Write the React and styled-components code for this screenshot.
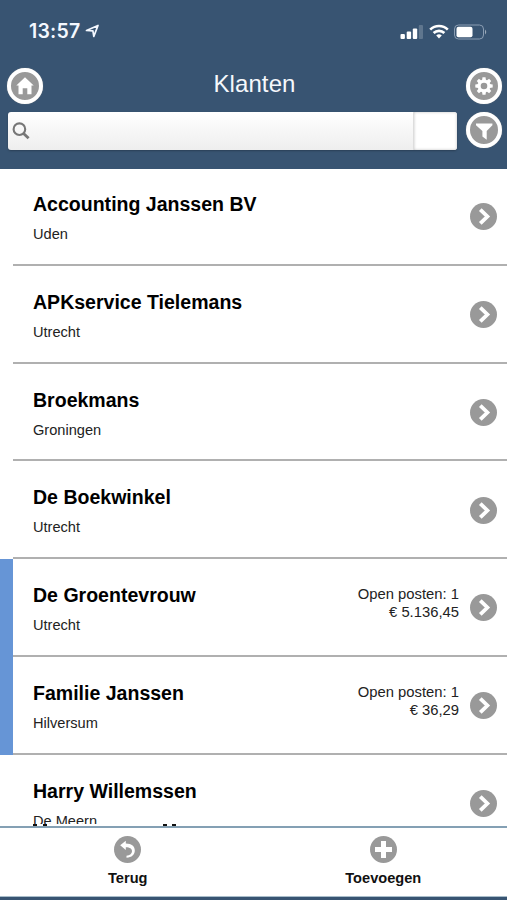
import styled, { createGlobalStyle } from "styled-components";

const GlobalStyle = createGlobalStyle`
  body {
    margin: 0;
    background-color: #385472;
    font-family: "Liberation Sans", Arial, sans-serif;
    color: #000;
  }
  * {
    box-sizing: border-box;
  }
`;

const Screen = styled.div`
  width: 507px;
  height: 900px;
  display: flex;
  flex-direction: column;
  overflow: hidden;
`;

const Header = styled.header`
  flex: none;
  height: 169px;
  background-color: #385472;
`;

const StatusBar = styled.div`
  height: 65px;
  padding: 2px 19px 5px 29px;
  display: flex;
  align-items: center;
  justify-content: space-between;
`;

const StatusGroup = styled.div`
  display: flex;
  align-items: center;
`;

const Time = styled.span`
  font-family: Inter, sans-serif;
  font-size: 19.5px;
  font-weight: 600;
  letter-spacing: 0.2px;
  color: #f4f8ff;
  width: 56px;
`;

const TitleBar = styled.div`
  height: 41px;
  padding: 0 5px 0 7px;
  display: flex;
  align-items: center;
  justify-content: space-between;
`;

const Title = styled.h1`
  margin: 0 0 4px;
  font-size: 24px;
  line-height: 30px;
  font-weight: 400;
  letter-spacing: 0.1px;
  color: #f5f8fc;
`;

const RoundButton = styled.button`
  flex: none;
  width: 36px;
  height: 36px;
  padding: 0;
  display: flex;
  align-items: center;
  justify-content: center;
  border: 4px solid #fff;
  border-radius: 50%;
  background-color: #999;
  box-shadow: 0 0 1px 0 #999;
`;

const SearchRow = styled.div`
  padding: 6px 5px 0 8px;
  display: flex;
  justify-content: space-between;
`;

const SearchBox = styled.div`
  width: 449px;
  height: 38px;
  display: flex;
  border-radius: 3px;
  overflow: hidden;
  background: linear-gradient(#fff, #eee);
  box-shadow: 0 1px 2px rgba(0, 0, 0, 0.25);
`;

const SearchField = styled.div`
  flex: 1;
  padding: 10px 0 0 4px;
`;

const SearchEnd = styled.div`
  width: 44px;
  border-left: 1px solid #ddd;
  background-color: #fff;
  box-shadow: inset 0 0 3px rgba(0, 0, 0, 0.25);
`;

const List = styled.main`
  flex: 1;
  min-height: 0;
  position: relative;
  overflow: hidden;
  background-color: #fff;
`;

const Row = styled.div`
  height: 97.8px;
  display: flex;
  border-left: 13px solid ${({ $marked }) => ($marked ? "#6695d6" : "#fff")};
  &:first-child {
    margin-top: -1px;
  }
`;

const RowBody = styled.div`
  flex: 1;
  padding: 0 10px 0 20px;
  display: flex;
  border-bottom: 2px solid #b0b0b0;
`;

const Customer = styled.div`
  flex: 1;
  padding-top: 24px;
`;

const Name = styled.h2`
  margin: 0;
  font-size: 19.55px;
  line-height: 24px;
  font-weight: 700;
`;

const City = styled.p`
  margin: 9px 0 0;
  font-size: 14.6px;
  line-height: 18px;
  color: #222;
`;

const OpenItems = styled.div`
  padding: 26px 11px 0 0;
  font-size: 14.8px;
  line-height: 18px;
  text-align: right;
  color: #222;
`;

const RowIcon = styled.div`
  padding-top: 35.3px;
  height: 63px;
`;

/* the next customer already peeks out above the footer */
const NextRowEdge = styled.div`
  position: absolute;
  left: 0;
  right: 0;
  bottom: 0;
  height: 2px;
  padding-left: 33px;
  display: flex;
  background-color: #fff;
`;

const LetterTop = styled.span`
  width: 4px;
  height: 2px;
  margin-right: ${({ $gap }) => $gap}px;
  background-color: #111;
`;

const Footer = styled.footer`
  flex: none;
  height: 74px;
  display: flex;
  background-color: #fff;
  border-top: 2px solid #84a0b4;
  border-bottom: 3px solid #385472;
  box-shadow: inset 0 -1px 0 #a9bdca;
`;

const FooterButton = styled.button`
  width: 255.5px;
  flex: none;
  border: 0;
  padding: 8px 0 0;
  background: none;
  display: flex;
  flex-direction: column;
  align-items: center;
  font-family: inherit;
  font-size: 14.6px;
  line-height: 18px;
  font-weight: 700;
  gap: 6px;
  color: #111;
`;

const customers = [
  { name: "Accounting Janssen BV", city: "Uden" },
  { name: "APKservice Tielemans", city: "Utrecht" },
  { name: "Broekmans", city: "Groningen" },
  { name: "De Boekwinkel", city: "Utrecht" },
  { name: "De Groentevrouw", city: "Utrecht", amount: "€ 5.136,45" },
  { name: "Familie Janssen", city: "Hilversum", amount: "€ 36,29" },
  { name: "Harry Willemssen", city: "De Meern" },
];

const LocationIcon = () => (
  <svg width="15" height="15" viewBox="0 0 15 15">
    <path d="M1.5 6.5 13 1.5 8.8 12.4 7.9 6.9Z" fill="none" stroke="#f4f8ff" strokeWidth="1.7" strokeLinejoin="round" />
  </svg>
);

const StatusIcons = () => (
  <svg width="88" height="17" viewBox="0 0 88 17" fill="#fff">
    <rect x="0.5" y="11" width="4.4" height="5" rx="1" />
    <rect x="6.7" y="8.5" width="4.4" height="7.5" rx="1" />
    <rect x="12.8" y="5.5" width="4.4" height="10.5" rx="1" />
    <rect x="18.8" y="2" width="4.2" height="14" rx="1" opacity=".2" />
    <g fill="none" stroke="#fff" strokeWidth="2.6">
      <path d="M30.2 6.6a12.5 12.5 0 0 1 17.6 0" />
      <path d="M33.6 10a7.8 7.8 0 0 1 10.8 0" />
    </g>
    <path d="M36.2 12.6a4 4 0 0 1 5.6 0L39 15.6Z" />
    <rect x="54.5" y="2" width="29" height="14" rx="4" fill="none" stroke="#8a9db3" />
    <rect x="56.5" y="3.7" width="16" height="10.6" rx="2" />
    <path d="M85 6.5q2.5 2.5 0 5Z" opacity=".5" />
  </svg>
);

const HomeIcon = () => (
  <svg width="28" height="28" viewBox="0 0 28 28" fill="#fff">
    <path d="M14 5.3 22.7 13.5H20.5v8.7h-4.2v-6h-4.6v6H7.5V13.5H5.3Z" />
  </svg>
);

const GearIcon = () => (
  <svg width="28" height="28" viewBox="0 0 28 28">
    <circle cx="14" cy="14" r="4.9" fill="none" stroke="#fff" strokeWidth="3.2" />
    {[0, 45, 90, 135, 180, 225, 270, 315].map((angle) => (
      <path key={angle} d="M12 8.5 12.5 5.3h3L16 8.5Z" fill="#fff" transform={`rotate(${angle} 14 14)`} />
    ))}
  </svg>
);

const FilterIcon = () => (
  <svg width="28" height="28" viewBox="0 0 28 28" fill="#fff">
    <path d="M6 7.5h16.4v1.8L16.7 15v8.7l-4.3-3.2V15L6 9.3Z" />
  </svg>
);

const SearchIcon = () => (
  <svg width="18" height="18" viewBox="0 0 18 18" fill="none" stroke="#777" strokeWidth="2.1">
    <circle cx="7.4" cy="7.2" r="5.8" />
    <path d="m11.6 11.4 5 4.8" strokeWidth="2.8" />
  </svg>
);

const ChevronIcon = () => (
  <svg width="27" height="27" viewBox="0 0 27 27">
    <circle cx="13.5" cy="13.5" r="13.5" fill="#999" />
    <path d="m10.3 6.6 7.1 6.9-7.1 6.9" fill="none" stroke="#fff" strokeWidth="3.8" />
  </svg>
);

const BackIcon = () => (
  <svg width="27" height="27" viewBox="0 0 27 27">
    <circle cx="13.5" cy="13.5" r="13.5" fill="#999" />
    <path d="M6.2 9.3 11.8 4.7v2.9c6.2.2 9 2.9 9 7 0 4.2-3 7-8.3 7.2v-2c3.6-.5 5.5-2.3 5.5-4.6 0-2.4-2-3.8-6.2-3.9v2.8Z" fill="#fff" />
  </svg>
);

const AddIcon = () => (
  <svg width="27" height="27" viewBox="0 0 27 27">
    <circle cx="13.5" cy="13.5" r="13.5" fill="#999" />
    <path d="M13.5 5v17M5 13.5h17" stroke="#fff" strokeWidth="5" />
  </svg>
);

const App = () => {
  return (
    <Screen>
      <GlobalStyle />
      <Header>
        <StatusBar>
          <StatusGroup>
            <Time>13:57</Time>
            <LocationIcon />
          </StatusGroup>
          <StatusIcons />
        </StatusBar>
        <TitleBar>
          <RoundButton>
            <HomeIcon />
          </RoundButton>
          <Title>Klanten</Title>
          <RoundButton>
            <GearIcon />
          </RoundButton>
        </TitleBar>
        <SearchRow>
          <SearchBox>
            <SearchField>
              <SearchIcon />
            </SearchField>
            <SearchEnd />
          </SearchBox>
          <RoundButton>
            <FilterIcon />
          </RoundButton>
        </SearchRow>
      </Header>
      <List>
        {customers.map(({ name, city, amount }) => (
          <Row key={name} $marked={Boolean(amount)}>
            <RowBody>
              <Customer>
                <Name>{name}</Name>
                <City>{city}</City>
              </Customer>
              {amount && (
                <OpenItems>
                  Open posten: 1<br />
                  {amount}
                </OpenItems>
              )}
              <RowIcon>
                <ChevronIcon />
              </RowIcon>
            </RowBody>
          </Row>
        ))}
        <NextRowEdge>
          <LetterTop $gap={6} />
          <LetterTop $gap={116} />
          <LetterTop $gap={5} />
          <LetterTop $gap={0} />
        </NextRowEdge>
      </List>
      <Footer>
        <FooterButton>
          <BackIcon />
          Terug
        </FooterButton>
        <FooterButton>
          <AddIcon />
          Toevoegen
        </FooterButton>
      </Footer>
    </Screen>
  );
};

export default App;
